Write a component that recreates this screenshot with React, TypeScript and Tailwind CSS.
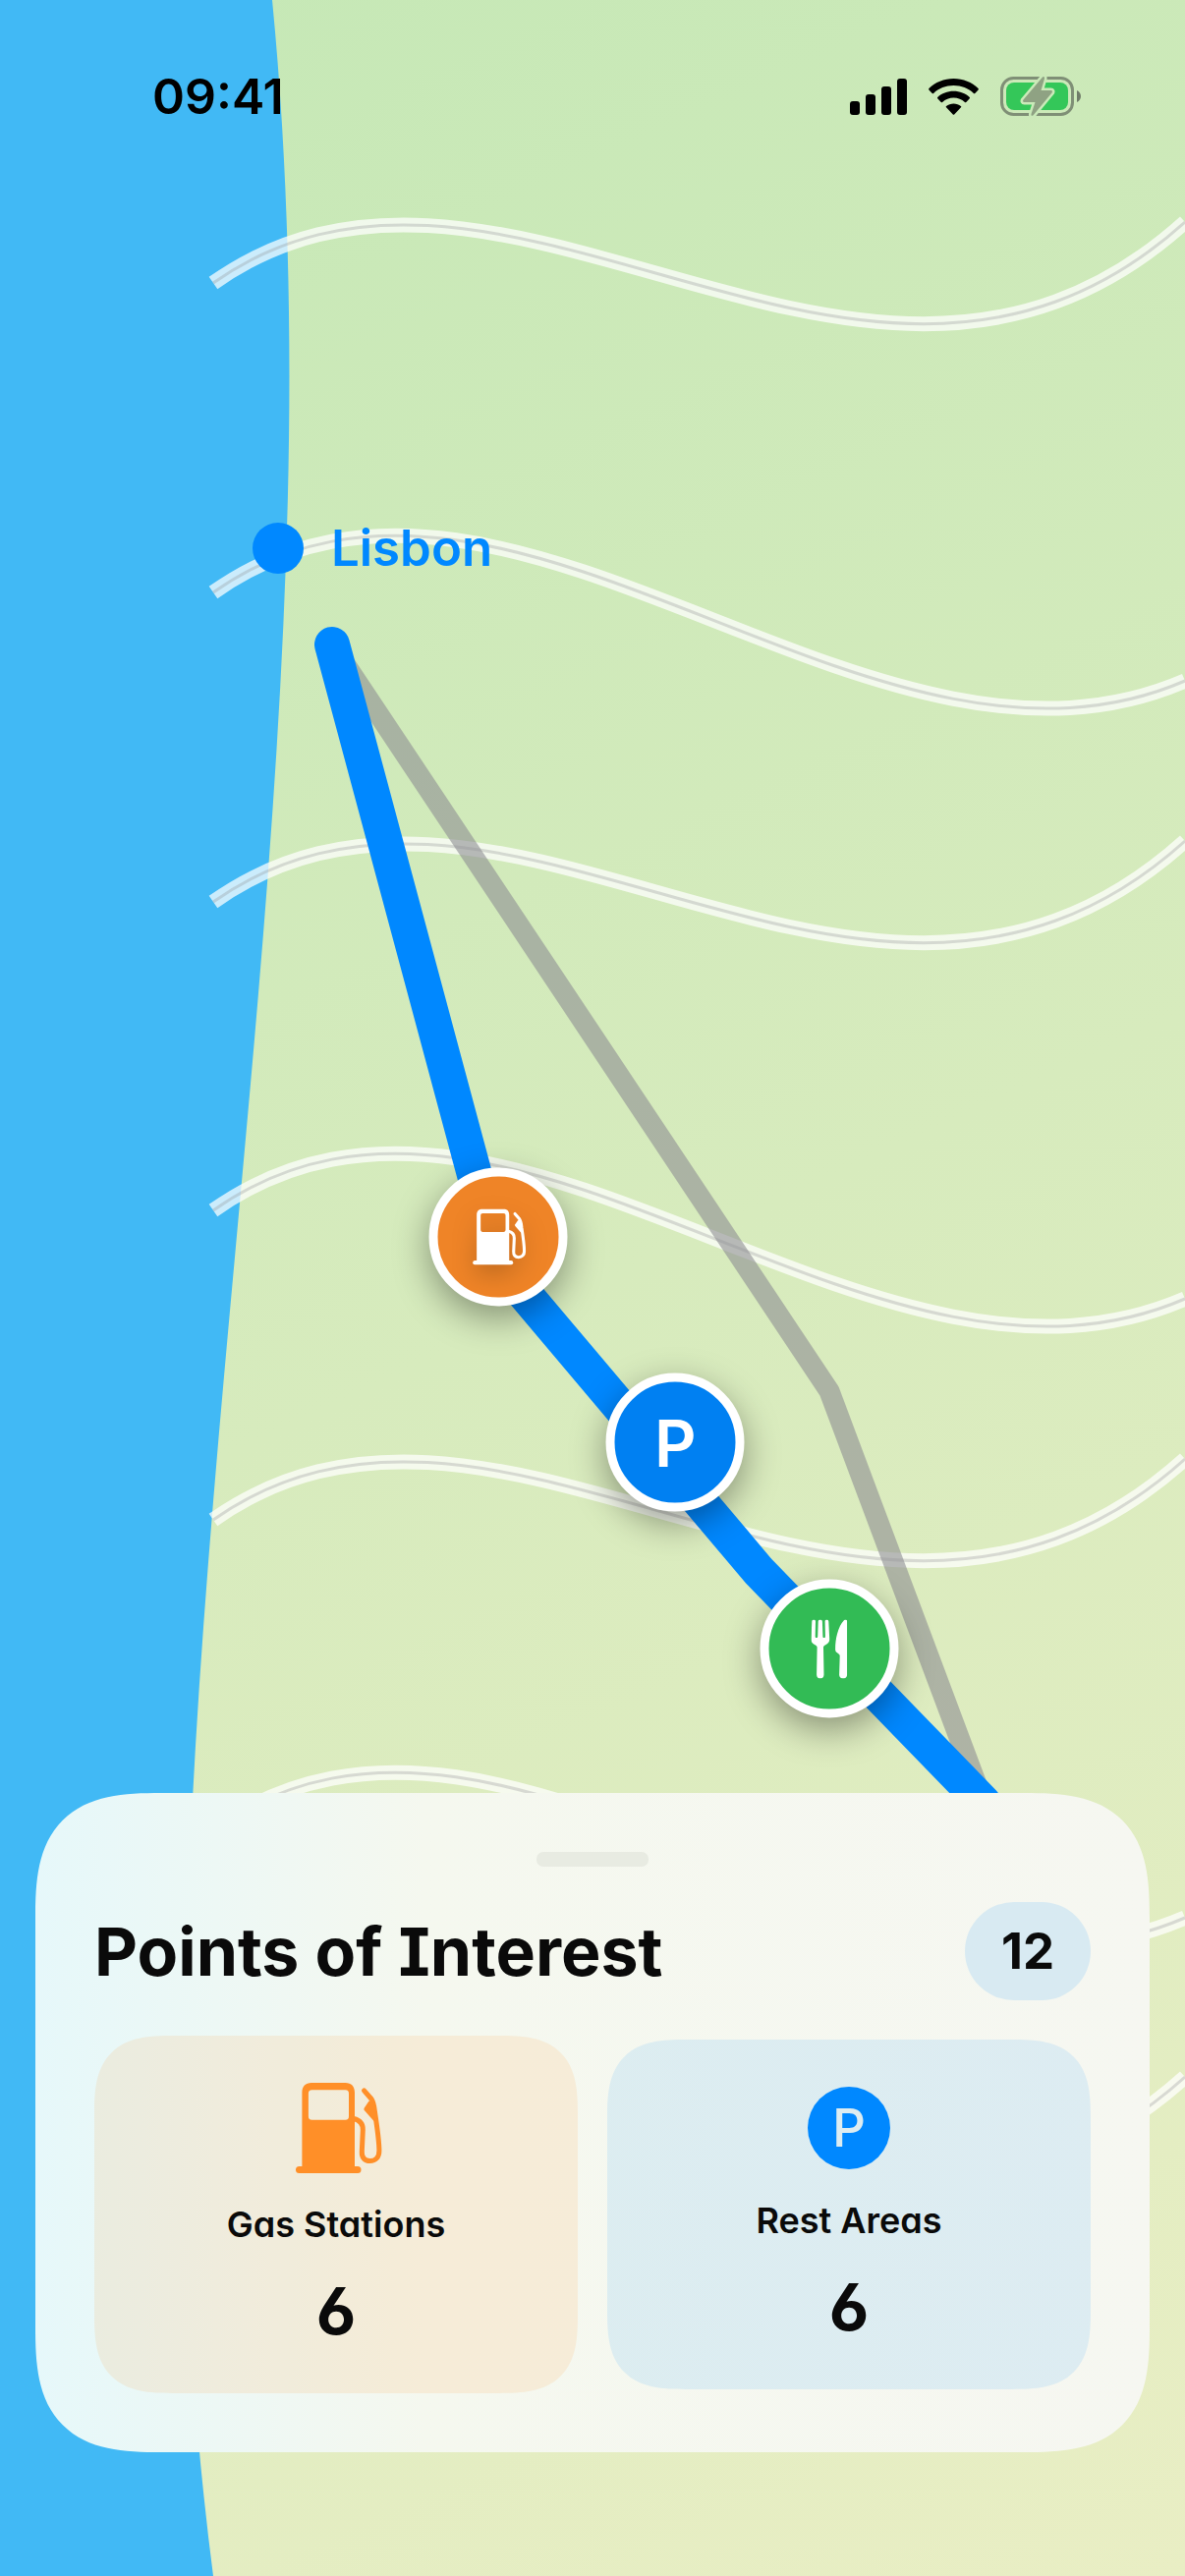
import type { ReactNode } from 'react';
import { clsx } from 'clsx';

const MAP_W = 1206;
const MAP_H = 2622;

// Roads share one curve; every second one ends lower.
const ROADS = [
  { y: 288, rise: -62 },
  { y: 603, rise: 90 },
  { y: 918, rise: -62 },
  { y: 1232, rise: 90 },
  { y: 1547, rise: -62 },
  { y: 1862, rise: 90 },
  { y: 2176, rise: -62 },
];

type StopKind = 'gas' | 'parking' | 'food';

const STOPS: { kind: StopKind; label: string; place: string; fill: string }[] = [
  { kind: 'gas', label: 'Gas station', place: 'left-[42%] top-[48%]', fill: 'bg-[#ef8427]' },
  { kind: 'parking', label: 'Rest area', place: 'left-[57%] top-[56%]', fill: 'bg-[#0080f2]' },
  { kind: 'food', label: 'Restaurant', place: 'left-[70%] top-[64%]', fill: 'bg-[#32bb55]' },
];

export default function App() {
  return (
    <main className="relative flex min-h-screen flex-col overflow-hidden bg-[#d5ebbc] font-['Inter','Liberation_Sans',sans-serif] text-[#0a0a0a] [font-feature-settings:'cv03','cv08','cv11']">
      <RouteMap />
      <StatusBar />
      <PointsOfInterest />
    </main>
  );
}

function RouteMap() {
  return (
    <div className="absolute inset-0">
      <svg
        viewBox={`0 0 ${MAP_W} ${MAP_H}`}
        preserveAspectRatio="none"
        className="block h-full w-full"
        fill="none"
        aria-hidden="true"
      >
        <defs>
          <linearGradient id="land" gradientUnits="userSpaceOnUse" x1="0" y1="0" x2="1206" y2="2622">
            <stop offset="0" stopColor="#c5e8b6" />
            <stop offset="1" stopColor="#e9eec4" />
          </linearGradient>
        </defs>
        <rect width={MAP_W} height={MAP_H} fill="url(#land)" />
        <path d="M0 0H277C362 874 103 1748 217 2622H0Z" fill="#41b9f5" />

        {ROADS.map((road) => {
          const d = `M217 ${road.y}C515 ${road.y - 210} 882 ${road.y + 230} 1206 ${road.y + road.rise}`;
          return (
            <g key={road.y}>
              <path d={d} stroke="#fff" strokeOpacity="0.73" strokeWidth="15" />
              <path d={d} stroke="#8e8e93" strokeOpacity="0.3" strokeWidth="3" />
            </g>
          );
        })}

        <path d="M338 656L844 1416L1001 1835" stroke="#8e8e93" strokeOpacity="0.6" strokeWidth="21" strokeLinejoin="round" />
        <path
          d="M338 656L507 1285L772 1599L1001 1835"
          stroke="#0088ff"
          strokeWidth="36"
          strokeLinecap="round"
          strokeLinejoin="round"
        />
      </svg>

      <div className="absolute left-[21.3%] top-[21.3%] flex -translate-y-1/2 items-center gap-7 text-[#0088ff]">
        <span className="size-[52px] rounded-full bg-[#0088ff]" />
        <span className="text-[51px] leading-[64px] font-semibold">Lisbon</span>
      </div>

      {STOPS.map((stop) => (
        <div
          key={stop.kind}
          role="img"
          aria-label={stop.label}
          className={clsx(
            'absolute flex size-[141px] -translate-x-1/2 -translate-y-1/2 items-center justify-center rounded-full border-9 border-white text-white shadow-[0_12px_36px_rgba(0,0,0,0.38)]',
            stop.place,
            stop.fill
          )}
        >
          <StopGlyph kind={stop.kind} />
        </div>
      ))}
    </div>
  );
}

function StopGlyph({ kind }: { kind: StopKind }) {
  if (kind === 'gas') return <FuelIcon className="h-[57px] w-[58px] drop-shadow-[0_10px_12px_rgba(0,0,0,0.2)]" />;
  if (kind === 'food') return <ForkKnifeIcon className="h-[60px] w-[37px]" />;
  return <span className="text-[66px] leading-none font-semibold">P</span>;
}

function StatusBar() {
  return (
    <header className="relative flex items-center justify-between pt-[66px] pr-[106px] pl-[155px] text-black">
      <time className="text-[50px] leading-[64px] font-semibold [font-feature-settings:normal]">09:41</time>
      <div className="flex items-center gap-[22px]">
        <svg viewBox="0 0 58 37" className="h-[37px] w-[58px]" fill="currentColor" aria-label="Signal">
          <rect y="23" width="10" height="14" rx="3" />
          <rect x="16" y="16" width="10" height="21" rx="3" />
          <rect x="32" y="8" width="10" height="29" rx="3" />
          <rect x="48" width="10" height="37" rx="3" />
        </svg>
        <svg viewBox="0 0 51 37" className="h-[37px] w-[51px]" fill="currentColor" aria-label="Wi-Fi">
          <path d="M25.500 0C35.300 0 44.200 3.800 50.600 9.900C51 10.300 51 11 50.600 11.400L47.300 14.900C46.900 15.300 46.300 15.300 45.900 14.900C40.600 10 33.400 7.100 25.500 7.100C17.600 7.100 10.400 10 5.100 14.900C4.700 15.300 4.100 15.300 3.700 14.900L.4 11.400C0 11 0 10.300 .4 9.900C6.800 3.800 15.700 0 25.500 0Z" />
          <path d="M25.500 12.700C31.800 12.700 37.600 15 41.800 18.900C42.200 19.300 42.200 19.900 41.800 20.300L38.300 23.900C37.900 24.300 37.300 24.300 36.900 23.900C33.900 21.200 29.900 19.600 25.500 19.600C21.100 19.600 17.100 21.200 14.100 23.900C13.700 24.300 13.100 24.300 12.700 23.900L9.200 20.300C8.800 19.900 8.800 19.300 9.200 18.900C13.400 15 19.200 12.700 25.500 12.700Z" />
          <path d="M25.500 25.400C28.300 25.400 30.900 26.300 32.900 27.900C33.400 28.300 33.400 28.900 33 29.300L26.200 36.500C25.800 36.900 25.200 36.900 24.800 36.500L18 29.300C17.600 28.900 17.600 28.300 18.100 27.900C20.100 26.300 22.700 25.400 25.500 25.400Z" />
        </svg>
        <BatteryIcon />
      </div>
    </header>
  );
}

function BatteryIcon() {
  const bolt = 'M43 1.500L23.500 24.500C22.500 26 23 27 24.500 27L35.500 27L31.500 39C31.200 41 32.500 41.500 33.800 40L52.500 17.500C53.500 16 53 15 51.500 15L41.500 15L45 3C45.300 1 44 .3 43 1.500Z';
  return (
    <svg viewBox="0 0 82 42" className="h-[42px] w-[82px]" aria-label="Battery charging">
      <rect x="1.500" y="2.500" width="72" height="37" rx="12" fill="none" stroke="#7f8f76" strokeWidth="3" />
      <path d="M78 15C80.500 16 82 18.500 82 21C82 23.500 80.500 26 78 27Z" fill="#6f7c68" />
      <rect x="6" y="7" width="63" height="28" rx="8" fill="#34c759" />
      <path d={bolt} fill="#8fa283" stroke="#caeab9" strokeWidth="5" paintOrder="stroke" strokeLinejoin="round" />
    </svg>
  );
}

function PointsOfInterest() {
  return (
    <section className="relative mx-9 mt-auto mb-[126px] rounded-[128px] bg-linear-to-r from-[#e6f8fa] via-[#f5f8ef] via-35% to-[#f6f7f1] p-[60px] [corner-shape:superellipse(1.5)]">
      <div className="mx-auto h-[15px] w-[114px] rounded-[7px] bg-[#e8ebe2]" />

      <div className="mt-9 flex items-center justify-between">
        <h1 className="text-[68px] leading-[83px] font-bold">Points of Interest</h1>
        <span className="flex h-[100px] w-32 items-center justify-center rounded-full bg-[#d8eaf2] text-[51px] leading-[64px] font-bold">
          12
        </span>
      </div>

      <div className="mt-9 grid grid-cols-2 items-center gap-[30px]">
        <PoiCard label="Gas Stations" count={6} tint="bg-[#ff9f30]/12">
          <FuelIcon className="h-[92px] w-[94px] text-[#ff8f28]" />
        </PoiCard>
        <PoiCard label="Rest Areas" count={6} tint="bg-[#0095ff]/10">
          <span
            aria-hidden="true"
            className="flex size-[84px] items-center justify-center rounded-full bg-[#0088ff] text-[53px] leading-none font-medium text-[#ddecf1]"
          >
            P
          </span>
        </PoiCard>
      </div>
    </section>
  );
}

function PoiCard(props: { label: string; count: number; tint: string; children: ReactNode }) {
  const { label, count, tint, children } = props;

  return (
    <div
      className={clsx(
        'flex flex-col items-center rounded-[80px] pt-12 pb-[42px] [corner-shape:superellipse(1.5)]',
        tint
      )}
    >
      {children}
      <div className="mt-[30px] text-[36px] leading-[45px] font-semibold">{label}</div>
      <div className="mt-6 text-[66px] leading-[83px] font-bold">{count}</div>
    </div>
  );
}

function FuelIcon({ className }: { className?: string }) {
  return (
    <svg viewBox="-6 0 94 92" className={className} fill="currentColor" aria-hidden="true">
      <path
        fillRule="evenodd"
        d="M6.400 86V10C6.400 3.500 10 0 16 0H50.500C56.500 0 60 3.500 60 10V86ZM16.500 7.300C14 7.300 12.900 8.500 12.900 11V34C12.900 36.500 14 37.700 16.500 37.700H50.500C53 37.700 54 36.500 54 34V11C54 8.500 53 7.300 50.500 7.300Z"
      />
      <rect y="85" width="66.500" height="7" rx="3.500" />
      <path
        d="M59 36.500C65 38 68.500 42 68.300 48L67.300 70C67 76 70 79.500 75.500 79.500C81 79.500 85 76 84.900 69C84.800 58 82.500 43 80.500 30C79.800 24 79.500 20 77 16.500L69.500 7.800"
        fill="none"
        stroke="currentColor"
        strokeWidth="5"
        strokeLinecap="round"
        strokeLinejoin="round"
      />
      <path d="M74.500 18.500L69.800 25.500C69.200 26.600 69.300 27.500 70 28.300L79.500 39L82.500 36L80.500 20Z" />
    </svg>
  );
}

function ForkKnifeIcon({ className }: { className?: string }) {
  return (
    <svg viewBox="0 0 37 60" className={className} fill="currentColor" aria-hidden="true">
      <path d="M.8 2C.9 .7 1.600 0 2.700 0C3.900 0 4.500 .8 4.500 2L4.200 17C4.200 18 4.600 18.500 5.400 18.500C6.200 18.500 6.700 18 6.700 17L7.200 2C7.300 .7 8.100 0 9.300 0C10.500 0 11.300 .7 11.400 2L11.900 17C11.900 18 12.400 18.500 13.200 18.500C14 18.500 14.400 18 14.400 17L14.100 2C14.100 .8 14.700 0 15.900 0C17 0 17.700 .7 17.800 2L18.700 19.500C18.900 22.500 17.500 24 15.500 25.200L13.800 26.200C12.900 26.800 12.500 27.300 12.500 28.300L13 56C13 58.500 11.500 60 9.300 60C7.100 60 5.600 58.500 5.600 56L6.100 28.300C6.100 27.300 5.700 26.800 4.800 26.200L3.100 25.200C1.100 24 -.3 22.500 0 19.500Z" />
      <path d="M28.600 56.300L29.200 37C29.200 36 28.900 35.500 28.100 34.900L26.200 33.600C25 32.700 24.600 31.700 24.600 30C24.600 19 27.500 7.500 33 1.200C33.700 .4 34.300 0 35 0C36 0 36.600 .7 36.600 1.800V56.300C36.600 58.600 34.900 60 32.600 60C30.300 60 28.600 58.600 28.600 56.300Z" />
    </svg>
  );
}
